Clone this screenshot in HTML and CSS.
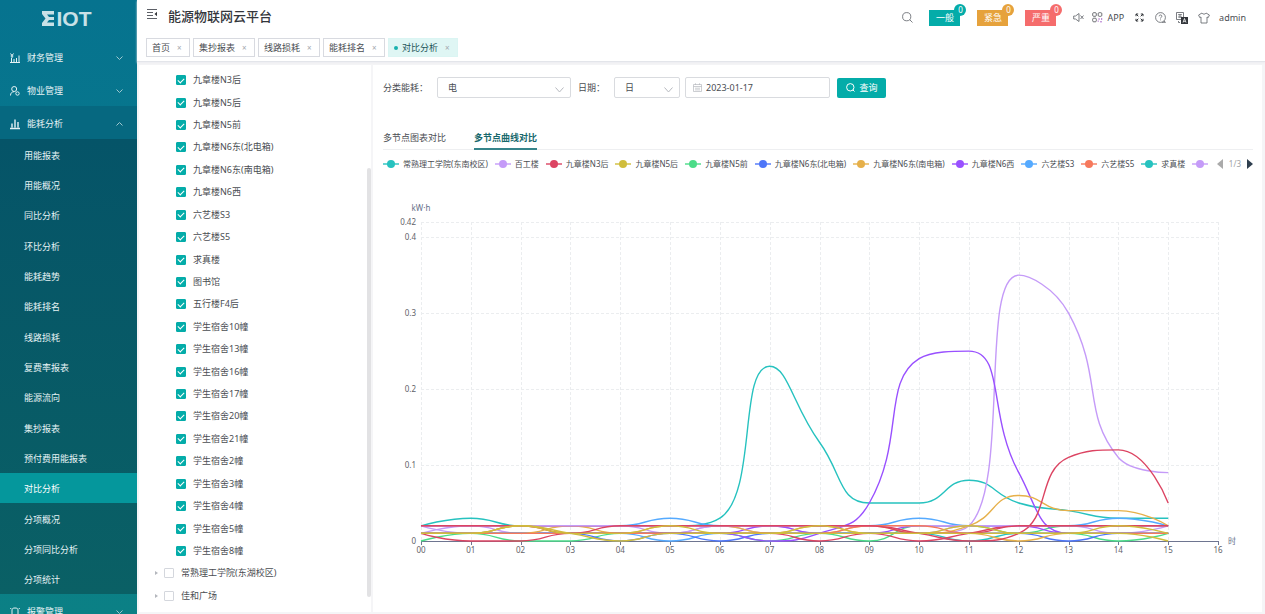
FILE: index.html
```html
<!DOCTYPE html>
<html lang="zh-CN">
<head>
<meta charset="utf-8">
<meta name="viewport" content="width=device-width, initial-scale=1">
<title>能源物联网云平台</title>
<link rel="stylesheet" href="styles.css">
</head>
<body>
<div class="app">
  <aside class="sidebar">
    <div class="logo">
      <svg class="logo-mark" viewBox="0 0 12 15" aria-hidden="true"><path d="M0 0H12V3.500H5L7 6H12V9H7L5 11.500H12V15H0V12L3.500 7.500L0 3Z"/></svg>
      <span>IOT</span>
    </div>
    <nav class="menu">
      <button class="menu-item" type="button">
        <svg class="menu-icon" viewBox="0 0 10 10"><path d="M0 9.500H10M1.500 9V5M4 9V6M6.500 9V5M9 9V2.500M.5.500L2 2.500L3.500.500M2 2.500V5M.7 3H3.300"/></svg>
        <span>财务管理</span>
        <svg class="menu-arrow" viewBox="0 0 7 4"><path d="M.5.500L3.500 3.500L6.500.500"/></svg>
      </button>
      <button class="menu-item" type="button">
        <svg class="menu-icon" viewBox="0 0 10 10"><circle cx="4.200" cy="3" r="2.500"/><path d="M.5 9.500C.5 7 2 5.700 4.200 5.700"/><circle cx="7.500" cy="7.500" r="1.700"/></svg>
        <span>物业管理</span>
        <svg class="menu-arrow" viewBox="0 0 7 4"><path d="M.5.500L3.500 3.500L6.500.500"/></svg>
      </button>
      <button class="menu-item open" type="button" aria-expanded="true">
        <svg class="menu-icon bars" viewBox="0 0 10 10"><path d="M0 9.500H10M2 8.500V4.500M5 8.500V.5M8 8.500V3"/></svg>
        <span>能耗分析</span>
        <svg class="menu-arrow" viewBox="0 0 7 4"><path d="M.5 3.500L3.500.500L6.500 3.500"/></svg>
      </button>
      <div class="submenu">
        <a href="#">用能报表</a>
        <a href="#">用能概况</a>
        <a href="#">同比分析</a>
        <a href="#">环比分析</a>
        <a href="#">能耗趋势</a>
        <a href="#">能耗排名</a>
        <a href="#">线路损耗</a>
        <a href="#">复费率报表</a>
        <a href="#">能源流向</a>
        <a href="#">集抄报表</a>
        <a href="#">预付费用能报表</a>
        <a href="#" class="active" aria-current="page">对比分析</a>
        <a href="#">分项概况</a>
        <a href="#">分项同比分析</a>
        <a href="#">分项统计</a>
      </div>
      <button class="menu-item" type="button">
        <svg class="menu-icon" viewBox="0 0 10 10"><path d="M2 9V3C2 1.500 3 1 5 1S8 1.500 8 3V9M.5 9.300H9.500M1 2L.5 1M9 2L9.500 1"/></svg>
        <span>报警管理</span>
        <svg class="menu-arrow" viewBox="0 0 7 4"><path d="M.5.500L3.500 3.500L6.500.500"/></svg>
      </button>
    </nav>
  </aside>

  <div class="main">
    <header class="header">
      <div class="header-top">
        <button class="icon-button" type="button" aria-label="折叠菜单">
          <svg class="fold" viewBox="0 0 12 10"><path d="M1 .5H11M1 3.500H7M1 6.500H7M1 9.500H11"/><path class="solid" d="M11 2.800V7.200L8.500 5Z"/></svg>
        </button>
        <h1>能源物联网云平台</h1>
        <div class="toolbar">
          <button class="icon-button" type="button" aria-label="搜索"><svg viewBox="0 0 11 11"><circle cx="4.700" cy="4.700" r="4.100"/><path d="M7.800 7.800L10.500 10.500"/></svg></button>
          <div class="alerts">
            <button class="alert normal" type="button">一般<span class="count">0</span></button>
            <button class="alert urgent" type="button">紧急<span class="count">0</span></button>
            <button class="alert severe" type="button">严重<span class="count">0</span></button>
          </div>
          <div class="tools">
            <button class="icon-button" type="button" aria-label="静音"><svg viewBox="0 0 11 11"><path d="M.7 4V7H2.500L6 9.500V1.500L2.500 4ZM7.500 3.500L10.500 7M10.500 3.500L7.500 7"/></svg></button>
            <a class="app-link" href="#"><svg viewBox="0 0 11 11"><rect x=".7" y=".7" width="3.600" height="3.600" rx="1"/><rect x="6.200" y=".7" width="3.600" height="3.600" rx="1"/><rect x=".7" y="6.200" width="3.600" height="3.600" rx="1"/><path class="violet" d="M6.200 7H8M9.700 6V8M6.200 9.800V8.500M8 9.800H10"/></svg>APP</a>
            <button class="icon-button" type="button" aria-label="全屏"><svg class="full" viewBox="0 0 11 11"><path d="M2 4.200V2H4.200M2 2L4.300 4.300M6.800 2H9V4.200M9 2L6.700 4.300M2 6.800V9H4.200M2 9L4.300 6.700M9 6.800V9H6.800M9 9L6.700 6.700"/></svg></button>
            <button class="icon-button" type="button" aria-label="帮助"><svg viewBox="0 0 11 11"><circle cx="5.500" cy="5.500" r="4.900"/><path d="M4.100 4.300C4.200 2.500 6.900 2.600 6.900 4.200C6.900 5.300 5.500 5.200 5.500 6.500M5.500 7.500V8.300M9 9L10.500 10.300H7"/></svg></button>
            <button class="icon-button" type="button" aria-label="语言"><svg class="wide" viewBox="0 0 12 12"><rect x=".6" y=".6" width="6.800" height="6.800"/><path d="M2 2.700H6M2 5H6M4 2V6M2.500 9V10.500H4"/><path class="solid" d="M5 5H12V12H5Z"/><path class="cut" d="M7 10.500L8.500 6.500L10 10.500M7.500 9.300H9.500"/></svg></button>
            <button class="icon-button" type="button" aria-label="主题"><svg class="wide" viewBox="0 0 12 12"><path d="M4 1L.6 3L1.700 5.500L3 5V11H9V5L10.300 5.500L11.400 3L8 1C7.500 2.500 4.500 2.500 4 1Z"/></svg></button>
            <a class="user" href="#">admin</a>
          </div>
        </div>
      </div>
      <nav class="tabs">
        <a class="tab" href="#">首页<span class="close">×</span></a>
        <a class="tab" href="#">集抄报表<span class="close">×</span></a>
        <a class="tab" href="#">线路损耗<span class="close">×</span></a>
        <a class="tab" href="#">能耗排名<span class="close">×</span></a>
        <a class="tab current" href="#"><i class="dot"></i>对比分析<span class="close">×</span></a>
      </nav>
    </header>

    <div class="content">
      <section class="tree-panel">
        <div class="tree">
          <label class="node leaf"><input type="checkbox" checked>九章楼N3后</label>
          <label class="node leaf"><input type="checkbox" checked>九章楼N5后</label>
          <label class="node leaf"><input type="checkbox" checked>九章楼N5前</label>
          <label class="node leaf"><input type="checkbox" checked>九章楼N6东(北电箱)</label>
          <label class="node leaf"><input type="checkbox" checked>九章楼N6东(南电箱)</label>
          <label class="node leaf"><input type="checkbox" checked>九章楼N6西</label>
          <label class="node leaf"><input type="checkbox" checked>六艺楼S3</label>
          <label class="node leaf"><input type="checkbox" checked>六艺楼S5</label>
          <label class="node leaf"><input type="checkbox" checked>求真楼</label>
          <label class="node leaf"><input type="checkbox" checked>图书馆</label>
          <label class="node leaf"><input type="checkbox" checked>五行楼F4后</label>
          <label class="node leaf"><input type="checkbox" checked>学生宿舍10幢</label>
          <label class="node leaf"><input type="checkbox" checked>学生宿舍13幢</label>
          <label class="node leaf"><input type="checkbox" checked>学生宿舍16幢</label>
          <label class="node leaf"><input type="checkbox" checked>学生宿舍17幢</label>
          <label class="node leaf"><input type="checkbox" checked>学生宿舍20幢</label>
          <label class="node leaf"><input type="checkbox" checked>学生宿舍21幢</label>
          <label class="node leaf"><input type="checkbox" checked>学生宿舍2幢</label>
          <label class="node leaf"><input type="checkbox" checked>学生宿舍3幢</label>
          <label class="node leaf"><input type="checkbox" checked>学生宿舍4幢</label>
          <label class="node leaf"><input type="checkbox" checked>学生宿舍5幢</label>
          <label class="node leaf"><input type="checkbox" checked>学生宿舍8幢</label>
          <label class="node"><i class="caret"></i><input type="checkbox">常熟理工学院(东湖校区)</label>
          <label class="node"><i class="caret"></i><input type="checkbox">佳和广场</label>
        </div>
        <div class="scroll"><div class="thumb"></div></div>
      </section>

      <section class="chart-panel">
        <form class="filters">
          <label for="energy">分类能耗：</label>
          <span class="select energy">
            <select id="energy"><option>电</option></select>
            <svg viewBox="0 0 9 6"><path d="M.5.500L4.500 5L8.500.500"/></svg>
          </span>
          <label for="period">日期：</label>
          <span class="select period">
            <select id="period"><option>日</option></select>
            <svg viewBox="0 0 9 6"><path d="M.5.500L4.500 5L8.500.500"/></svg>
          </span>
          <span class="date">
            <svg viewBox="0 0 9 9"><path d="M.5 1.500H8.500V8.500H.5ZM.5 3.500H8.500M2.500.300V2M6.500.300V2M2 5.200H7M2 6.900H7"/></svg>
            <input type="text" value="2023-01-17" aria-label="选择日期">
          </span>
          <button class="query" type="button"><svg viewBox="0 0 9 9"><circle cx="4.300" cy="4.300" r="3.700"/><path d="M6.800 6.800L8.500 8.500"/></svg>查询</button>
        </form>
        <nav class="view-tabs">
          <a href="#">多节点图表对比</a>
          <a href="#" class="selected">多节点曲线对比</a>
        </nav>
        <div class="legend">
          <ul class="legend-items" id="legend"></ul>
          <div class="pager"><i class="prev"></i><span>1/3</span><i class="next"></i></div>
        </div>
        <svg class="chart" id="chart" role="img" aria-label="多节点曲线对比"></svg>
      </section>
    </div>
  </div>
</div>
<script src="app.js"></script>
</body>
</html>
```

FILE: styles.css
```css
* { box-sizing: border-box; }

body {
  margin: 0;
  font: 9px/14px "Noto Sans", "Noto Sans CJK SC", sans-serif;
  color: #4a4d52;
  background: #f5f5f7;
}

button, input, select { font: inherit; color: inherit; }
button { border: 0; padding: 0; background: none; cursor: pointer; }
a { color: inherit; text-decoration: none; }
svg { fill: none; stroke: currentColor; stroke-width: 1; }

.app { display: flex; height: 100vh; overflow: hidden; }

/* Sidebar */
.sidebar {
  flex: 0 0 137px;
  overflow: hidden;
  color: #e6f3f5;
  background: linear-gradient(#06738f, #0b8085);
}
.logo {
  display: flex;
  align-items: center;
  justify-content: center;
  gap: 3px;
  height: 40px;
  padding: 0 4px 3px 0;
  font: bold 21px/36px "Liberation Sans", Arial, sans-serif;
  color: #c8e1e7;
}
.logo-mark { width: 12px; height: 15px; fill: currentColor; stroke: none; }
.menu-item {
  display: flex;
  align-items: center;
  width: 100%;
  height: 33px;
  padding: 2px 14px 0 10px;
  gap: 7px;
}
.menu-item.open { background: #066880; }
.menu-icon { width: 10px; height: 10px; overflow: visible; }
.bars { stroke-width: 1.4; }
.menu-arrow { width: 7px; height: 4px; margin-left: auto; stroke: #9fc8d0; }
.submenu {
  display: grid;
  grid-auto-rows: 1fr;
  height: 455px;
  background: linear-gradient(#055468, #0a6065);
}
.submenu a { display: flex; align-items: center; padding: 3px 0 0 24px; }
.submenu .active { background: #05979c; color: #fff; }

/* Header */
.main { flex: 1; min-width: 0; display: flex; flex-direction: column; }
.header {
  padding: 0 19px 4px 9px;
  background: #fff;
  border-bottom: 1px solid #e3e5ea;
  box-shadow: 0 1px 2px #ececf0;
}
.header-top { display: flex; align-items: center; height: 38px; padding-bottom: 3px; }
.header h1 {
  margin: 0 0 4px 10px;
  font-size: 13px;
  font-weight: 500;
  line-height: 18px;
  color: #33363b;
}
.icon-button { display: block; color: #5c5f66; }
.header svg { display: block; width: 11px; height: 11px; stroke-width: 0.8; }
.header svg.fold { width: 12px; height: 10px; margin-bottom: 7px; stroke-width: 1; }
.header svg.wide { width: 12px; height: 12px; }
.header svg.full { stroke: #33363b; stroke-width: 1; }
.header .solid { fill: #33363b; stroke: none; }
.cut { stroke: #fff; }
.violet { stroke: #9a4fc0; }
.toolbar { display: flex; align-items: center; margin-left: auto; }
.alerts { display: flex; gap: 17px; margin: 0 17px 0 16px; }
.alert { position: relative; width: 31px; height: 16px; line-height: 16px; color: #fff; }
.normal, .normal .count { background: #04aca9; }
.urgent, .urgent .count { background: #e6a23c; }
.severe, .severe .count { background: #f56c6c; }
.count {
  position: absolute;
  top: -6px;
  right: -6px;
  width: 12px;
  height: 12px;
  border-radius: 6px;
  font-size: 8px;
  line-height: 12px;
  text-align: center;
}
.tools { display: flex; align-items: center; gap: 10px; }
.app-link { display: flex; align-items: center; gap: 4px; margin-left: -2px; }
.user { margin-left: -1px; }
.tabs { display: flex; gap: 3px; }
.tab {
  display: flex;
  align-items: center;
  height: 19px;
  padding: 0 7px 0 5px;
  border: 1px solid #d8dae0;
}
.close { width: 5px; margin-left: 7px; font-size: 8px; color: #a5a8ae; }
.tab.current { border-color: #dbf5f3; background: #dff6f4; color: #1d5559; }
.dot { width: 4px; height: 4px; margin-right: 4px; border-radius: 50%; background: #18b1ae; }

/* Content */
.content { flex: 1; min-height: 0; display: flex; gap: 2px; padding: 3px 3px 2px 2px; }
.tree-panel { flex: 0 0 232px; display: flex; overflow: hidden; background: #fff; }
.tree {
  flex: 1;
  display: grid;
  grid-auto-rows: 1fr;
  height: 542px;
  padding: 4px 0 0 16px;
}
.node { display: flex; align-items: center; gap: 7px; }
.leaf { padding-left: 21px; }
.caret {
  width: 3px;
  border: 2px solid transparent;
  border-left: 3px solid #b4b7bd;
  border-right: 0;
  margin-right: -1px;
}
.node input {
  appearance: none;
  display: grid;
  place-items: center;
  width: 10px;
  height: 10px;
  margin: 0;
  border: 1px solid #d4d7dd;
  border-radius: 1px;
  background: #fff;
}
.node input:checked { border-color: #04aca9; background: #04aca9; }
.node input:checked::after {
  content: "";
  width: 5px;
  height: 3px;
  margin-bottom: 1px;
  border: solid #fff;
  border-width: 0 0 1px 1px;
  transform: rotate(-45deg);
}
.scroll { width: 4px; padding-top: 103px; }
.thumb { height: 429px; border-radius: 2px; background: #e2e2e4; }

.chart-panel { flex: 1; min-width: 0; padding: 12px 9px 0 10px; background: #fff; }
.filters { display: flex; align-items: center; height: 21px; }
.filters label { margin-right: 9px; }
.select { position: relative; height: 21px; }
.energy { width: 134px; margin-right: 7px; }
.period { width: 66px; margin-right: 5px; }
.select select {
  appearance: none;
  width: 100%;
  height: 21px;
  padding: 0 10px;
  border: 1px solid #d9dbdf;
  border-radius: 2px;
  background: #fff;
}
.select svg { position: absolute; right: 7px; top: 10px; width: 9px; height: 6px; stroke: #b6b9bf; pointer-events: none; }
.date {
  display: flex;
  align-items: center;
  gap: 4px;
  width: 145px;
  height: 21px;
  margin-right: 7px;
  padding: 0 7px;
  border: 1px solid #d9dbdf;
  border-radius: 2px;
}
.date svg { width: 9px; height: 9px; stroke: #b6b9bf; stroke-width: 0.7; }
.date input { flex: 1; min-width: 0; border: 0; padding: 0; outline: 0; background: none; }
.query {
  display: flex;
  align-items: center;
  justify-content: center;
  gap: 5px;
  width: 49px;
  height: 20px;
  border-radius: 2px;
  background: #04aca9;
  color: #fff;
}
.query svg { width: 9px; height: 9px; }

.view-tabs { display: flex; gap: 28px; margin-top: 29px; border-bottom: 1px solid #eeeff1; }
.view-tabs a { height: 23px; line-height: 21px; margin-bottom: -1px; }
.view-tabs .selected { font-weight: 600; color: #17686c; border-bottom: 2px solid #35848a; }

.legend { display: flex; align-items: center; margin-top: 7px; font-size: 8px; }
.legend-items {
  flex: 1;
  min-width: 0;
  display: flex;
  gap: 7px;
  margin: 0;
  padding: 0;
  overflow: hidden;
  list-style: none;
  white-space: nowrap;
}
.legend-items li { flex: none; display: flex; align-items: center; gap: 4px; }
.legend-items svg { width: 16px; height: 8px; }
.pager { display: flex; align-items: center; gap: 6px; padding-left: 5px; color: #a0a2a6; }
.prev, .next { border: 5px solid transparent; }
.prev { border-left: 0; border-right: 6px solid #aaa; }
.next { border-right: 0; border-left: 6px solid #2f3f4f; }

.chart { display: block; width: 100%; height: 388px; stroke: none; font-size: 8px; }
.grid-line { stroke: #ebedef; stroke-dasharray: 3 2; }
.axis-line { stroke: #6e7590; }
.axis-text { fill: #5f6269; }
.axis-name { fill: #65708a; }
.series { fill: none; stroke-width: 1.4; }
```

FILE: app.js
```js
const palette = ['#26c2bf', '#c59bf8', '#dc4462', '#d0bd3c', '#4bdc88', '#4e76f8', '#e6b04a', '#9950ff', '#55aaff', '#f6795c'];

const legendNames = ['常熟理工学院(东南校区)', '百工楼', '九章楼N3后', '九章楼N5后', '九章楼N5前', '九章楼N6东(北电箱)',
  '九章楼N6东(南电箱)', '九章楼N6西', '六艺楼S3', '六艺楼S5', '求真楼', ''];

document.getElementById('legend').innerHTML = legendNames.map((name, i) => {
  const color = palette[i % palette.length];
  return `<li><svg viewBox="0 0 16 8"><path d="M0 4H16" stroke="${color}" stroke-width="1.400"/><circle cx="8" cy="4" r="4" fill="${color}" stroke="none"/></svg>${name}</li>`;
}).join('');

// Hourly readings, in hundredths of a kWh.
const series = [
  [0, [2, 3, 2, 2, 2, 2, 3, 23, 13, 5, 5, 8, 5, 4, 3, 3]],
  [8, [2, 2, 2, 2, 2, 3, 2, 2, 2, 2, 3, 2, 2, 2, 3, 2]],
  [8, [1, 1, 1, 1, 1, 0, 1, 1, 1, 1, 1, 1, 1, 1, 1, 1]],
  [1, [2, 1, 2, 2, 2, 1, 2, 1, 1, 1, 1, 2, 2, 2, 1, 2]],
  [1, [1, 2, 1, 1, 1, 1, 2, 2, 1, 1, 1, 2, 35, 30, 11, 9]],
  [4, [0, 1, 0, 0, 1, 1, 1, 0, 1, 0, 2, 2, 1, 2, 2, 2]],
  [4, [1, 1, 1, 1, 1, 1, 1, 1, 1, 1, 1, 1, 1, 1, 0, 1]],
  [5, [1, 1, 1, 1, 0, 1, 0, 1, 1, 1, 1, 1, 1, 0, 1, 1]],
  [7, [1, 1, 1, 1, 1, 1, 1, 2, 1, 1, 2, 2, 2, 1, 1, 1]],
  [7, [1, 1, 1, 1, 1, 1, 1, 0, 1, 5, 24, 25, 9, 1, 1, 1]],
  [0, [1, 1, 1, 1, 1, 1, 1, 1, 1, 1, 1, 0, 1, 1, 1, 1]],
  [6, [1, 1, 1, 2, 1, 2, 2, 1, 1, 2, 1, 1, 0, 1, 1, 1]],
  [6, [1, 1, 2, 1, 1, 1, 1, 1, 2, 1, 1, 2, 6, 4, 4, 2]],
  [2, [1, 0, 0, 1, 1, 1, 1, 1, 0, 1, 0, 1, 2, 2, 2, 2]],
  [2, [2, 2, 2, 2, 2, 2, 2, 2, 2, 2, 1, 0, 1, 11, 12, 5]],
  [1, [2, 2, 2, 2, 2, 2, 2, 2, 2, 2, 2, 2, 2, 2, 2, 2]],
  [9, [1, 1, 1, 1, 1, 1, 1, 1, 1, 2, 2, 1, 1, 1, 1, 1]],
  [2, [2, 2, 2, 1, 2, 2, 2, 2, 2, 2, 1, 1, 2, 2, 2, 2]],
  [3, [1, 1, 2, 1, 0, 1, 1, 1, 1, 1, 1, 1, 1, 1, 1, 0]],
  [3, [1, 1, 2, 1, 1, 2, 1, 1, 2, 1, 1, 2, 1, 1, 2, 1]]
];

const clamp = (v, a, b) => Math.max(Math.min(a, b), Math.min(Math.max(a, b), v));

// Cubic spline whose control points never leave the range of neighbouring points.
function smoothPath(points) {
  let d = `M${points[0]}`;
  let cp0 = points[0];
  for (let i = 1; i < points.length; i++) {
    const p = points[i], prev = points[i - 1], next = points[i + 1];
    let cp1 = p, nextCp0 = p;
    if (next) {
      const before = Math.hypot(p[0] - prev[0], p[1] - prev[1]);
      const after = Math.hypot(next[0] - p[0], next[1] - p[1]);
      const ratio = after / (after + before);
      const ahead = p.map((v, k) => clamp(v + (next[k] - prev[k]) * 0.5 * ratio, v, next[k]));
      cp1 = p.map((v, k) => clamp(v - (ahead[k] - v) * before / after, prev[k], v));
      nextCp0 = p.map((v, k) => v + (v - cp1[k]) * after / before);
    }
    d += `C${cp0} ${cp1} ${p}`;
    cp0 = nextCp0;
  }
  return d;
}

function drawChart() {
  const svg = document.getElementById('chart');
  const width = svg.clientWidth;
  const left = 38, right = width - 35, top = 51, bottom = 370;
  const x = hour => left + (right - left) * hour / 16;
  const y = value => bottom - (bottom - top) * value / 42;
  const snap = v => Math.round(v) + 0.5;
  let out = '';

  for (const v of [10, 20, 30, 40, 42]) {
    out += `<path class="grid-line" d="M${left} ${snap(y(v))}H${right}"/>`;
  }
  for (const v of [0, 10, 20, 30, 40, 42]) {
    out += `<text class="axis-text" x="${left - 5}" y="${y(v) + 3}" text-anchor="end">${v / 100}</text>`;
  }
  for (let h = 0; h <= 16; h++) {
    out += `<path class="grid-line" d="M${snap(x(h))} ${top}V${bottom}"/>`;
    out += `<path class="axis-line" d="M${snap(x(h))} ${bottom}V${bottom + 4}"/>`;
    out += `<text class="axis-text" x="${x(h)}" y="${bottom + 12}" text-anchor="middle">${String(h).padStart(2, '0')}</text>`;
  }
  out += `<path class="axis-line" d="M${left} ${bottom + 0.5}H${right}"/>`;
  out += `<text class="axis-name" x="${left}" y="${top - 11}" text-anchor="middle">kW·h</text>`;
  out += `<text class="axis-name" x="${right + 10}" y="${bottom + 3}">时</text>`;
  for (const [color, values] of series) {
    out += `<path class="series" stroke="${palette[color]}" d="${smoothPath(values.map((v, h) => [x(h), y(v)]))}"/>`;
  }
  svg.innerHTML = out;
}

drawChart();
window.addEventListener('resize', drawChart);
```
